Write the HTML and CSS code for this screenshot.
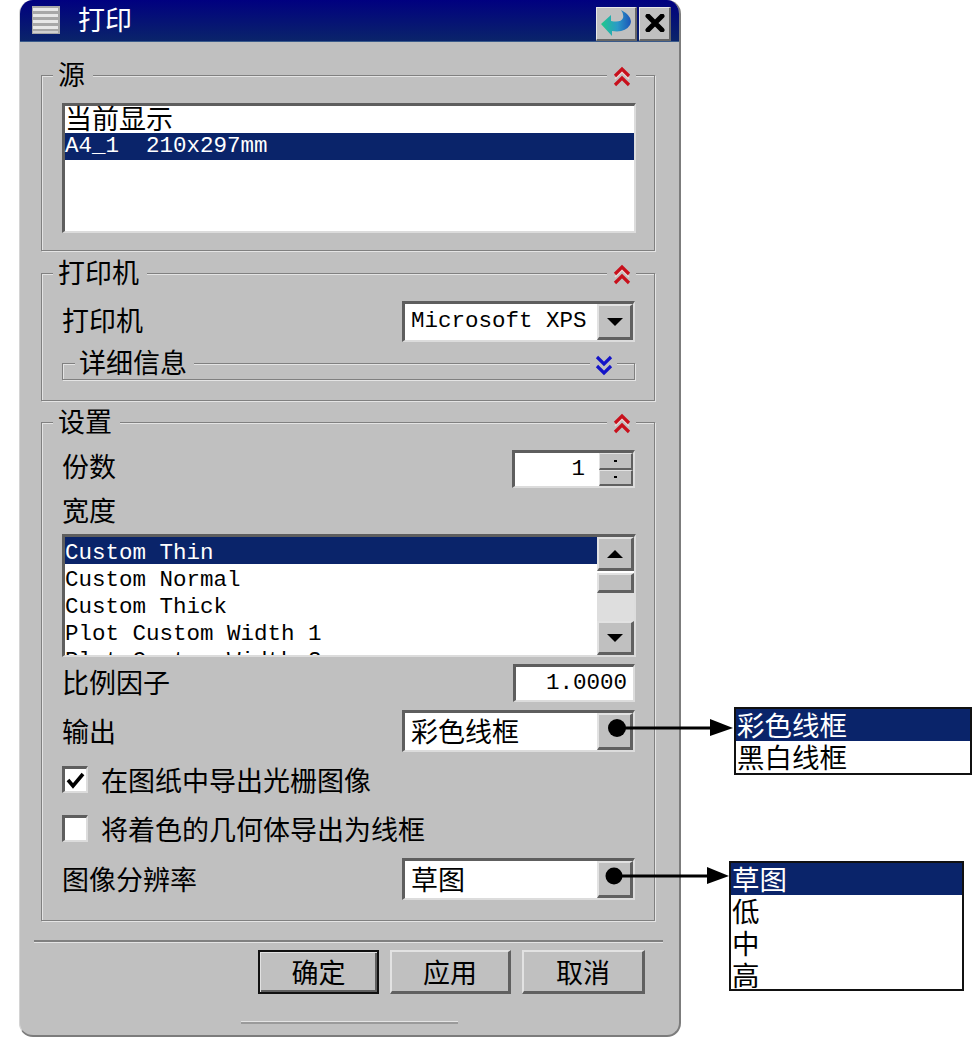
FILE: index.html
```html
<!DOCTYPE html>
<html lang="zh-CN">
<head>
<meta charset="utf-8">
<title>打印</title>
<link rel="stylesheet" href="styles.css">
</head>
<body>
<div class="page">
  <div class="dialog">
    <header class="titlebar">
      <svg class="menu-icon" width="28" height="28" viewBox="0 0 28 28">
        <rect width="28" height="28" fill="#a8a8a8"/>
        <rect x="1" y="2" width="25" height="3" fill="#e8e8e8"/>
        <rect x="1" y="8" width="25" height="3" fill="#e8e8e8"/>
        <rect x="1" y="14" width="25" height="3" fill="#e8e8e8"/>
        <rect x="1" y="20" width="25" height="3" fill="#e8e8e8"/>
        <rect x="1" y="25" width="25" height="2" fill="#d0d0d0"/>
      </svg>
      <span class="title-text">打印</span>
      <div class="title-buttons">
        <div class="title-btn help-btn">
          <svg width="31" height="26" viewBox="0 0 31 26">
            <defs>
              <linearGradient id="helpgrad" x1="0" x2="1" y1="0" y2="0">
                <stop offset="0" stop-color="#1fc98a"/>
                <stop offset="0.55" stop-color="#2a9ac8"/>
                <stop offset="1" stop-color="#1a55b8"/>
              </linearGradient>
            </defs>
            <path d="M20 0 Q33 7 29 15 Q24 23 11 21 L11 26 L0 14 L10 5 L10 11 Q20 13 22 8 Q23 4 20 0Z" fill="url(#helpgrad)"/>
          </svg>
        </div>
        <div class="title-btn close-btn">
          <svg width="20" height="18" viewBox="0 0 20 18">
            <path d="M3 2 L17 16 M17 2 L3 16" stroke="#000" stroke-width="5" stroke-linecap="round"/>
          </svg>
        </div>
      </div>
    </header>

    <main class="content">
      <section class="group group-source">
        <span class="legend">源</span>
        <span class="chevron">
          <svg width="18" height="21" viewBox="0 0 18 21"><path d="M2 13 L9 6 L16 13" fill="none" stroke="#f2d4d4" stroke-width="1.6"/><path d="M2 10 L9 3 L16 10 M2 19 L9 12 L16 19" fill="none" stroke="#c8101c" stroke-width="3.2"/></svg>
        </span>
        <div class="sunken listbox listbox-source">
          <div class="list-item cjk-item">当前显示</div>
          <div class="list-item selected mono">A4_1  210x297mm</div>
        </div>
      </section>

      <section class="group group-printer">
        <span class="legend">打印机</span>
        <span class="chevron">
          <svg width="18" height="21" viewBox="0 0 18 21"><path d="M2 13 L9 6 L16 13" fill="none" stroke="#f2d4d4" stroke-width="1.6"/><path d="M2 10 L9 3 L16 10 M2 19 L9 12 L16 19" fill="none" stroke="#c8101c" stroke-width="3.2"/></svg>
        </span>
        <div class="row row-printer">
          <span class="label">打印机</span>
          <div class="sunken combo">
            <span class="combo-value mono">Microsoft XPS</span>
            <span class="raised combo-btn"><i class="tri-down"></i></span>
          </div>
        </div>
        <div class="subgroup">
          <span class="legend sub-legend">详细信息</span>
          <span class="chevron sub-chevron">
            <svg width="18" height="21" viewBox="0 0 18 21"><path d="M2 2 L9 9 L16 2 M2 11 L9 18 L16 11" fill="none" stroke="#1414c8" stroke-width="3.2"/></svg>
          </span>
        </div>
      </section>

      <section class="group group-settings">
        <span class="legend">设置</span>
        <span class="chevron">
          <svg width="18" height="21" viewBox="0 0 18 21"><path d="M2 13 L9 6 L16 13" fill="none" stroke="#f2d4d4" stroke-width="1.6"/><path d="M2 10 L9 3 L16 10 M2 19 L9 12 L16 19" fill="none" stroke="#c8101c" stroke-width="3.2"/></svg>
        </span>
        <div class="row row-spin">
          <span class="label">份数</span>
          <div class="sunken spin">
            <span class="spin-value mono">1</span>
            <span class="spin-btns">
              <span class="raised spin-btn"><i class="dot"></i></span>
              <span class="raised spin-btn"><i class="dot"></i></span>
            </span>
          </div>
        </div>
        <div class="label label-width">宽度</div>
        <div class="sunken listbox listbox-width">
          <div class="list-rows">
            <div class="list-item selected mono">Custom Thin</div>
            <div class="list-item mono">Custom Normal</div>
            <div class="list-item mono">Custom Thick</div>
            <div class="list-item mono">Plot Custom Width 1</div>
            <div class="list-item mono">Plot Custom Width 2</div>
          </div>
          <div class="scrollbar">
            <span class="raised sb-btn sb-up"><i class="tri-up"></i></span>
            <span class="raised sb-thumb"></span>
            <span class="sb-track"></span>
            <span class="raised sb-btn sb-down"><i class="tri-down"></i></span>
          </div>
        </div>
        <div class="row row-scale">
          <span class="label">比例因子</span>
          <div class="sunken number-input mono">1.0000</div>
        </div>
        <div class="row row-output">
          <span class="label">输出</span>
          <div class="sunken combo">
            <span class="combo-value">彩色线框</span>
            <span class="raised combo-btn"></span>
          </div>
        </div>
        <label class="check-row check-first">
          <span class="sunken checkbox">
            <svg width="21" height="19" viewBox="0 0 21 19"><path d="M3 9 L8 15 L18 3" fill="none" stroke="#000" stroke-width="3.6"/></svg>
          </span>
          <span class="label">在图纸中导出光栅图像</span>
        </label>
        <label class="check-row check-second">
          <span class="sunken checkbox"></span>
          <span class="label">将着色的几何体导出为线框</span>
        </label>
        <div class="row row-resolution">
          <span class="label">图像分辨率</span>
          <div class="sunken combo">
            <span class="combo-value">草图</span>
            <span class="raised combo-btn"></span>
          </div>
        </div>
      </section>
    </main>

    <footer class="footer">
      <div class="separator"></div>
      <div class="actions">
        <button class="btn btn-default" type="button">确定</button>
        <button class="btn" type="button">应用</button>
        <button class="btn btn-wide" type="button">取消</button>
      </div>
      <div class="grip"></div>
    </footer>
  </div>

  <div class="popup popup-output">
    <div class="popup-item selected">彩色线框</div>
    <div class="popup-item">黑白线框</div>
  </div>
  <div class="popup popup-resolution">
    <div class="popup-item selected">草图</div>
    <div class="popup-item">低</div>
    <div class="popup-item">中</div>
    <div class="popup-item">高</div>
  </div>

  <svg class="callouts" width="972" height="1045" viewBox="0 0 972 1045">
    <circle cx="617" cy="728" r="9" fill="#000"/>
    <rect x="617" y="726.5" width="95" height="3" fill="#000"/>
    <path d="M710 719 L733 728 L710 736Z" fill="#000"/>
    <circle cx="614" cy="876" r="8.5" fill="#000"/>
    <rect x="614" y="874.5" width="95" height="3" fill="#000"/>
    <path d="M707 867 L729 876 L707 884Z" fill="#000"/>
  </svg>
</div>
</body>
</html>
```
FILE: styles.css
```css
* { box-sizing: border-box; }
html, body { margin: 0; padding: 0; background: #fff; }
body {
  font-family: "Noto Sans CJK SC", "Liberation Sans", sans-serif;
  font-size: 27px;
  color: #000;
}
.page { position: relative; width: 972px; height: 1045px; overflow: hidden; }

.dialog {
  margin-left: 19px;
  width: 662px;
  height: 1037px;
  background: #c0c0c0;
  border-radius: 14px;
  border-right: 2px solid #7c7c7c;
  border-left: 1px solid #d4d4d4;
  border-bottom: 2px solid #7c7c7c;
  overflow: hidden;
  display: flex;
  flex-direction: column;
}

.titlebar {
  height: 42px;
  flex: none;
  margin: 0 -2px 0 -1px;
  background: linear-gradient(#000080, #0a246a);
  border-bottom: 1px solid #3a5a8a;
  display: flex;
  align-items: center;
  padding: 0 10px 0 13px;
  color: #fff;
}
.menu-icon { flex: none; margin-bottom: 1px; }
.title-text { margin-left: 18px; line-height: 42px; margin-top: -4px; }
.title-buttons { margin-left: auto; display: flex; gap: 2px; padding-top: 6px; }
.title-btn {
  height: 34px;
  background: #c0c0c0;
  border-top: 1px solid #e8e8e8;
  border-left: 1px solid #e8e8e8;
  border-bottom: 2px solid #666;
  border-right: 2px solid #666;
  display: flex;
  align-items: center;
  justify-content: center;
}
.help-btn { width: 41px; }
.close-btn { width: 32px; }

.content { padding: 33px 24px 0 21px; flex: none; }

.group {
  position: relative;
  border: 1px solid #808080;
  box-shadow: inset 1px 1px 0 #e4e4e4, 1px 1px 0 #e4e4e4;
  padding: 27px 19px 0 20px;
}
.group-source { height: 176px; }
.group-printer { height: 128px; margin-top: 22px; }
.group-settings { height: 499px; margin-top: 21px; }

.legend {
  position: absolute;
  left: 11px;
  top: -16px;
  height: 28px;
  line-height: 28px;
  padding: 0 8px 0 5px;
  background: #c0c0c0;
}
.chevron {
  position: absolute;
  left: 565px;
  top: -10px;
  width: 29px;
  height: 21px;
  background: #c0c0c0;
  display: flex;
  justify-content: center;
}

.sunken {
  background: #fff;
  border-top: 3px solid #5e5e5e;
  border-left: 3px solid #5e5e5e;
  border-bottom: 2px solid #dcdcdc;
  border-right: 2px solid #dcdcdc;
}
.raised {
  display: block;
  background: #c0c0c0;
  border-top: 2px solid #e2e2e2;
  border-left: 2px solid #e2e2e2;
  border-bottom: 3px solid #606060;
  border-right: 3px solid #606060;
}

.mono {
  font-family: "Liberation Mono", "DejaVu Sans Mono", monospace;
  font-size: 22.5px;
  white-space: pre;
}

.listbox { width: 574px; }
.listbox-source { height: 130px; }
.listbox-width { height: 123px; margin-top: 10px; display: flex; overflow: hidden; }
.list-rows { flex: 1; overflow: hidden; min-width: 0; }
.list-item { height: 27px; line-height: 27px; white-space: pre; }
.listbox-width .list-item { line-height: 33px; }
.cjk-item { line-height: 24px; }
.selected { background: #0a246a; color: #fff; }

.row { display: flex; justify-content: space-between; align-items: center; }
.label { line-height: 28px; white-space: nowrap; }
.row-printer .label, .row-scale .label { margin-bottom: 3px; }
.row-spin .label { margin-bottom: 6px; }

.combo { width: 233px; height: 41px; display: flex; align-items: stretch; }
.combo-value { flex: 1; padding-left: 6px; line-height: 34px; white-space: nowrap; }
.combo-btn { width: 36px; flex: none; display: flex; align-items: center; justify-content: center; }

.subgroup {
  position: relative;
  height: 17px;
  margin-top: 21px;
  border: 1px solid #808080;
  box-shadow: inset 1px 1px 0 #e4e4e4, 1px 1px 0 #e4e4e4;
}
.sub-legend { left: 12px; top: -16px; padding: 0 7px 0 4px; }
.sub-chevron { left: 527px; top: -9px; width: 27px; height: 23px; }

.tri-down, .tri-up { display: block; width: 0; height: 0; border-left: 8px solid transparent; border-right: 8px solid transparent; }
.tri-down { border-top: 8px solid #000; }
.tri-up { border-bottom: 8px solid #000; }

.spin { width: 123px; height: 38px; display: flex; }
.spin-value { flex: 1; text-align: right; padding-right: 14px; line-height: 33px; }
.spin-btns { width: 34px; flex: none; display: flex; flex-direction: column; }
.spin-btn { flex: 1; display: flex; align-items: center; justify-content: center; border-width: 1px 2px 2px 1px; }
.dot { display: block; width: 3px; height: 2px; background: #000; }

.label-width { margin-top: 8px; }

.scrollbar { width: 37px; flex: none; display: flex; flex-direction: column; }
.sb-btn { height: 34px; flex: none; display: flex; align-items: center; justify-content: center; }
.sb-thumb { height: 20px; flex: none; margin-top: 2px; }
.sb-track { flex: 1; background: #dedede; }

.row-scale { margin-top: 7px; }
.number-input { width: 122px; height: 38px; text-align: right; padding-right: 6px; line-height: 33px; }
.row-output { margin-top: 8px; }
.row-output .combo, .row-resolution .combo { height: 42px; }
.row-output .combo-value, .row-resolution .combo-value { line-height: 35px; }

.check-row { display: flex; align-items: center; gap: 13px; height: 27px; }
.check-first { margin-top: 14px; }
.check-second { margin-top: 22px; }
.checkbox { width: 26px; height: 27px; flex: none; display: flex; align-items: center; justify-content: center; }
.row-resolution { margin-top: 16px; }

.footer { flex: 1; display: flex; flex-direction: column; padding-top: 19px; }
.separator {
  height: 2px;
  margin: 0 16px 0 14px;
  background: #808080;
  box-shadow: 0 1px 0 #e4e4e4;
}
.actions { display: flex; justify-content: flex-end; gap: 11px; margin-top: 8px; padding-right: 34px; }
.btn {
  width: 121px;
  height: 44px;
  padding: 0;
  font: inherit;
  line-height: 36px;
  color: #000;
  background: #c0c0c0;
  border-style: solid;
  border-width: 2px 3px 3px 2px;
  border-color: #e2e2e2 #606060 #606060 #e2e2e2;
}
.btn-wide { width: 123px; }
.btn-default {
  border-width: 2px;
  border-color: #111;
  box-shadow: inset 1px 1px 0 #e2e2e2, inset -2px -2px 0 #606060;
}
.grip {
  width: 217px;
  height: 3px;
  margin: 27px 0 0 221px;
  background: #9a9a9a;
  border-top: 1px solid #e4e4e4;
}

.popup {
  position: absolute;
  background: #fff;
  border: 2px solid #111;
  font-size: 27.5px;
}
.popup-output { left: 734px; top: 707px; width: 238px; height: 68px; }
.popup-resolution { left: 729px; top: 861px; width: 235px; height: 130px; }
.popup-item { height: 32px; line-height: 31px; padding-left: 1px; white-space: nowrap; }

.callouts { position: absolute; left: 0; top: 0; pointer-events: none; }
```
